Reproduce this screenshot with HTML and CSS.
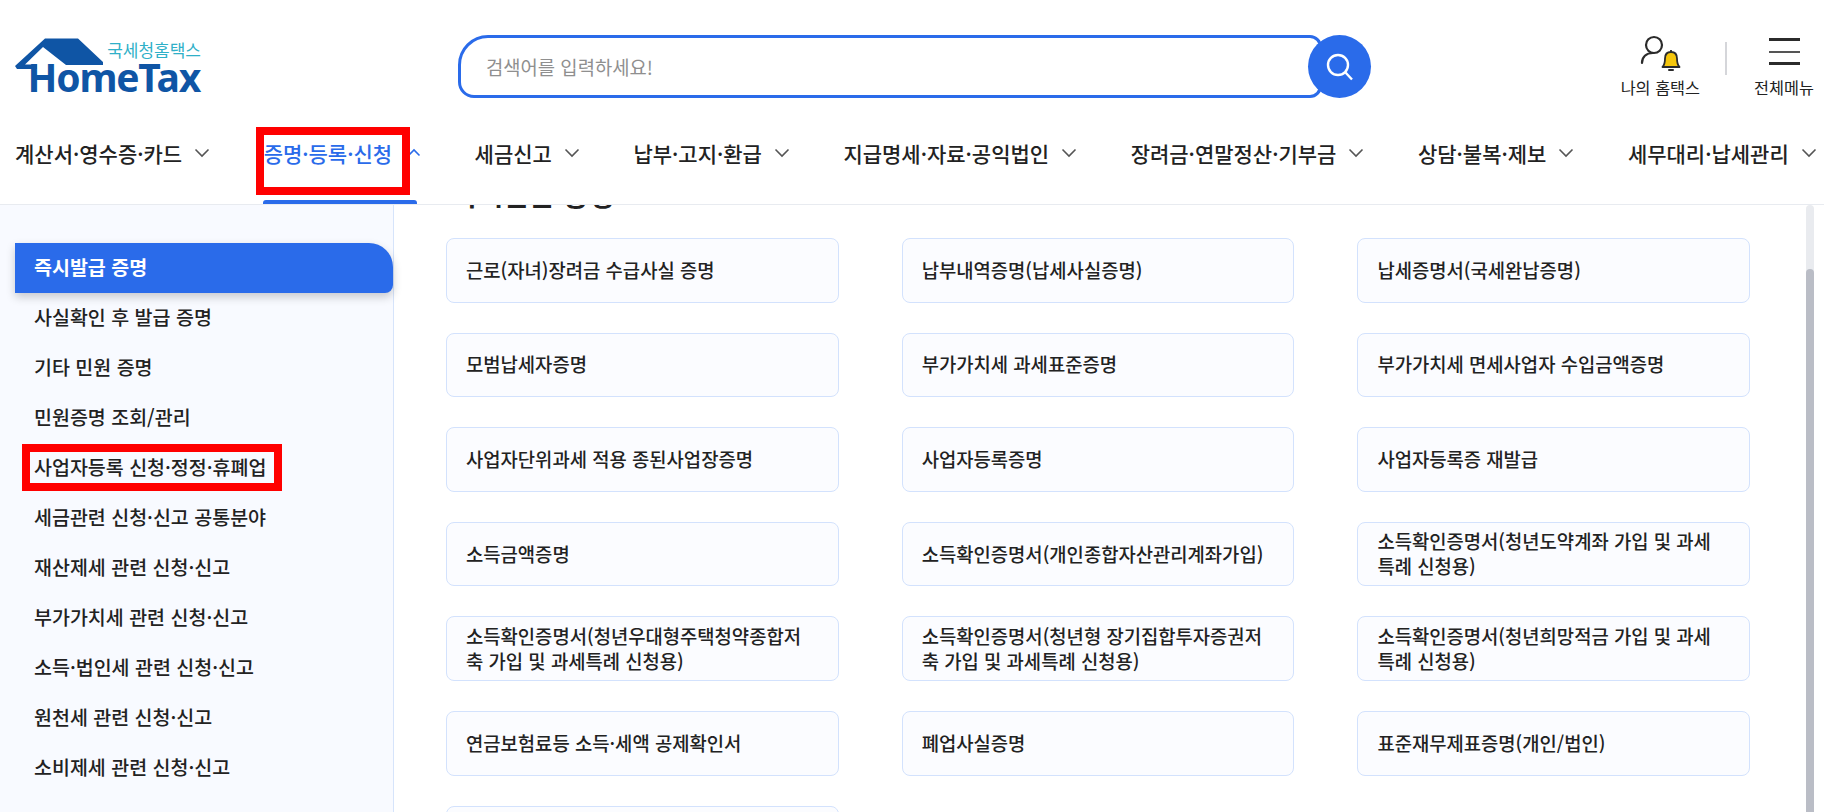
FILE: index.html
```html
<!DOCTYPE html>
<html lang="ko">
<head>
    <meta charset="UTF-8">
    <meta name="viewport" content="width=device-width, initial-scale=1.0">
    <title>국세청 홈택스</title>
    <link rel="stylesheet" href="styles.css">
</head>
<body>
    <header class="header">
        <div class="top-row">
            <a class="logo">
                <svg class="logo-roof" width="100" height="40" viewBox="0 0 100 40">
                    <path d="M0 28 L30 0.5 H63 L88 24 V27 H51 L28 9 L10 26.5 H22 V31 H2 Z" fill="#0f55a5"/>
                </svg>
                <span class="logo-sub">국세청홈택스</span>
                <span class="logo-main">HomeTax</span>
            </a>
            <div class="search">
                <input class="search-input" type="text" placeholder="검색어를 입력하세요!">
                <button class="search-btn" aria-label="검색">
                    <svg width="32" height="32" viewBox="0 0 32 32" fill="none" stroke="#fff">
                        <circle cx="14" cy="14" r="10" stroke-width="2.4"/>
                        <path d="M21.5 21.5 L28 28.5" stroke-width="2.4"/>
                    </svg>
                </button>
            </div>
            <div class="utils">
                <a class="util util-my">
                    <svg width="42" height="38" viewBox="0 0 42 38" fill="none">
                        <circle cx="15" cy="10" r="8" stroke="#2b2b2b" stroke-width="2.2"/>
                        <path d="M3 28 C3 22 7 18 14 18" stroke="#2b2b2b" stroke-width="2.2" stroke-linecap="round"/>
                        <path d="M23.5 32 C25.5 30 26 27 26 23.5 C26 19 28.5 17 32 17 C35.5 17 38 19 38 23.5 C38 27 38.5 30 40.5 32 Z" fill="#f5c60c" stroke="#2b2b2b" stroke-width="1.8" stroke-linejoin="round"/>
                        <path d="M30 35 H34" stroke="#2b2b2b" stroke-width="2" stroke-linecap="round"/>
                        <path d="M32 17 V15" stroke="#2b2b2b" stroke-width="1.8"/>
                    </svg>
                    <span>나의 홈택스</span>
                </a>
                <div class="util-line"></div>
                <a class="util util-all">
                    <span class="burger"><i></i><i class="thin"></i><i></i></span>
                    <span>전체메뉴</span>
                </a>
            </div>
        </div>
        <nav class="nav">
            <a class="nav-item">계산서·영수증·카드<svg class="chev" width="16" height="10" viewBox="0 0 16 10"><path d="M1.5 1.5 L8 8 L14.5 1.5"/></svg></a>
            <a class="nav-item active">증명·등록·신청<svg class="chev" width="14" height="10" viewBox="0 0 14 10"><path d="M1.5 7.5 L7 2 L12.5 7.5"/></svg><span class="mark mark-nav"></span></a>
            <a class="nav-item">세금신고<svg class="chev" width="16" height="10" viewBox="0 0 16 10"><path d="M1.5 1.5 L8 8 L14.5 1.5"/></svg></a>
            <a class="nav-item">납부·고지·환급<svg class="chev" width="16" height="10" viewBox="0 0 16 10"><path d="M1.5 1.5 L8 8 L14.5 1.5"/></svg></a>
            <a class="nav-item">지급명세·자료·공익법인<svg class="chev" width="16" height="10" viewBox="0 0 16 10"><path d="M1.5 1.5 L8 8 L14.5 1.5"/></svg></a>
            <a class="nav-item">장려금·연말정산·기부금<svg class="chev" width="16" height="10" viewBox="0 0 16 10"><path d="M1.5 1.5 L8 8 L14.5 1.5"/></svg></a>
            <a class="nav-item">상담·불복·제보<svg class="chev" width="16" height="10" viewBox="0 0 16 10"><path d="M1.5 1.5 L8 8 L14.5 1.5"/></svg></a>
            <a class="nav-item">세무대리·납세관리<svg class="chev" width="16" height="10" viewBox="0 0 16 10"><path d="M1.5 1.5 L8 8 L14.5 1.5"/></svg></a>
        </nav>
    </header>

    <div class="body-row">
        <aside class="sidebar">
            <a class="side-item active">즉시발급 증명</a>
            <a class="side-item">사실확인 후 발급 증명</a>
            <a class="side-item">기타 민원 증명</a>
            <a class="side-item">민원증명 조회/관리</a>
            <a class="side-item">사업자등록 신청·정정·휴폐업<span class="mark mark-side"></span></a>
            <a class="side-item">세금관련 신청·신고 공통분야</a>
            <a class="side-item">재산제세 관련 신청·신고</a>
            <a class="side-item">부가가치세 관련 신청·신고</a>
            <a class="side-item">소득·법인세 관련 신청·신고</a>
            <a class="side-item">원천세 관련 신청·신고</a>
            <a class="side-item">소비제세 관련 신청·신고</a>
        </aside>
        <main class="content">
            <h2 class="content-title">즉시발급 증명</h2>
            <div class="card-grid">
                <a class="card">근로(자녀)장려금 수급사실 증명</a>
                <a class="card">납부내역증명(납세사실증명)</a>
                <a class="card">납세증명서(국세완납증명)</a>
                <a class="card">모범납세자증명</a>
                <a class="card">부가가치세 과세표준증명</a>
                <a class="card">부가가치세 면세사업자 수입금액증명</a>
                <a class="card">사업자단위과세 적용 종된사업장증명</a>
                <a class="card">사업자등록증명</a>
                <a class="card">사업자등록증 재발급</a>
                <a class="card">소득금액증명</a>
                <a class="card">소득확인증명서(개인종합자산관리계좌가입)</a>
                <a class="card">소득확인증명서(청년도약계좌 가입 및 과세특례 신청용)</a>
                <a class="card">소득확인증명서(청년우대형주택청약종합저축 가입 및 과세특례 신청용)</a>
                <a class="card">소득확인증명서(청년형 장기집합투자증권저축 가입 및 과세특례 신청용)</a>
                <a class="card">소득확인증명서(청년희망적금 가입 및 과세특례 신청용)</a>
                <a class="card">연금보험료등 소득·세액 공제확인서</a>
                <a class="card">폐업사실증명</a>
                <a class="card">표준재무제표증명(개인/법인)</a>
                <a class="card"></a>
            </div>
        </main>
        <div class="scrollbar"><div class="scroll-thumb"></div></div>
    </div>
</body>
</html>
```

FILE: styles.css
```css
* {
    box-sizing: border-box;
}

html, body {
    margin: 0;
    padding: 0;
    height: 812px;
    overflow: hidden;
    background-color: #fff;
    color: #222;
    font-family: "Noto Sans CJK KR", "Noto Sans", sans-serif;
}

/* header */
.header {
    height: 205px;
    border-bottom: 1px solid #e8ebf0;
}

.top-row {
    display: flex;
    align-items: flex-start;
    height: 120px;
    padding: 35px 10px 0 15px;
}

.logo {
    display: grid;
    width: 186px;
    height: 60px;
    margin-right: 257px;
}

.logo-roof,
.logo-sub,
.logo-main {
    grid-area: 1 / 1;
}

.logo-roof {
    margin-top: 3px;
}

.logo-sub {
    justify-self: end;
    margin-top: 5px;
    font-size: 17px;
    line-height: 20px;
    color: #2fb0c8;
}

.logo-main {
    justify-self: end;
    align-self: end;
    margin-right: 1px;
    font-family: "Noto Sans", sans-serif;
    font-size: 39px;
    font-weight: 700;
    line-height: 36px;
    letter-spacing: -1.2px;
    color: #0f55a5;
}

.search {
    display: flex;
    width: 913px;
}

.search-input {
    width: 864px;
    height: 63px;
    padding: 0 25px;
    border: 3px solid #2a6bea;
    border-radius: 30px 12px 12px 16px;
    outline: none;
    font-family: inherit;
    font-size: 18.8px;
}

.search-input::placeholder {
    color: #8f8f8f;
}

.search-btn {
    display: flex;
    align-items: center;
    justify-content: center;
    flex: none;
    width: 63px;
    height: 63px;
    margin-left: -14px;
    border: none;
    border-radius: 50%;
    background-color: #2a6bea;
    cursor: pointer;
}

.utils {
    display: flex;
    margin-left: auto;
}

.util {
    display: flex;
    flex-direction: column;
    align-items: center;
    font-size: 16.3px;
    line-height: 20px;
    color: #222;
}

.util svg {
    margin-bottom: 4px;
}

.util-line {
    width: 2px;
    height: 33px;
    margin: 7px 27px 0 25px;
    background-color: #d5d6da;
}

.burger {
    display: flex;
    flex-direction: column;
    justify-content: space-between;
    width: 31px;
    height: 27px;
    margin: 3px 0 12px;
}

.burger i {
    display: block;
    height: 3px;
    background-color: #2b2b2b;
}

.burger i.thin {
    height: 2px;
    background-color: #555;
}

/* main menu */
.nav {
    position: relative;
    display: flex;
    gap: 53.5px;
    height: 84px;
    padding: 0 0 18px 15px;
    white-space: nowrap;
}

.nav-item {
    position: relative;
    display: flex;
    flex: none;
    align-items: center;
    gap: 12px;
    font-size: 21px;
    font-weight: 500;
    color: #222;
}

.chev {
    flex: none;
    fill: none;
    stroke: #555;
    stroke-width: 1.6;
}

.nav-item.active {
    gap: 15px;
    color: #2a6bea;
}

.nav-item.active .chev {
    stroke: #2a6bea;
}

.nav-item.active::after {
    content: "";
    position: absolute;
    left: -1px;
    right: 4px;
    bottom: -18px;
    height: 4px;
    border-radius: 3px 3px 0 0;
    background-color: #2a6bea;
}

/* red marks over the screenshot */
.mark {
    position: absolute;
    border: 8px solid #f00;
}

.mark-nav {
    left: -8px;
    top: 7px;
    width: 154px;
    height: 68px;
}

.mark-side {
    left: 7px;
    top: 1px;
    width: 260px;
    height: 47px;
}

/* body */
.body-row {
    display: flex;
    height: 607px;
    overflow: hidden;
}

.sidebar {
    flex: none;
    width: 394px;
    padding: 38px 0 0 15px;
    border-right: 1px solid #d6e4fb;
    background-color: #f8faff;
}

.side-item {
    position: relative;
    display: flex;
    align-items: center;
    height: 50px;
    padding: 0 0 4px 19px;
    font-size: 19.5px;
    font-weight: 500;
    color: #222;
}

.side-item.active {
    border-radius: 0 24px 8px 0;
    background-color: #2a6bea;
    box-shadow: 0 4px 10px rgba(0, 0, 0, 0.2);
    color: #fff;
    font-weight: 700;
}

.content {
    flex: none;
    width: 1412px;
    padding-left: 52px;
}

.content-title {
    height: 34px;
    margin: -28px 0 27px 6px;
    font-size: 28px;
    font-weight: 700;
    line-height: 34px;
    color: #222;
}

.card-grid {
    display: grid;
    grid-template-columns: repeat(3, 392.7px);
    grid-auto-rows: 64.6px;
    gap: 30px 63px;
}

.card {
    display: flex;
    align-items: center;
    padding: 0 24px 2px 19px;
    border: 1px solid #d3e2fd;
    border-radius: 8px;
    background-color: #fbfcff;
    font-size: 18.8px;
    font-weight: 500;
    line-height: 25px;
    color: #222;
    word-break: break-all;
}

.scrollbar {
    flex: none;
    width: 8px;
    border-radius: 4px;
    background-color: #e9ebef;
}

.scroll-thumb {
    height: 100%;
    margin-top: 64px;
    border-radius: 4px;
    background-color: #babdc6;
}
```
